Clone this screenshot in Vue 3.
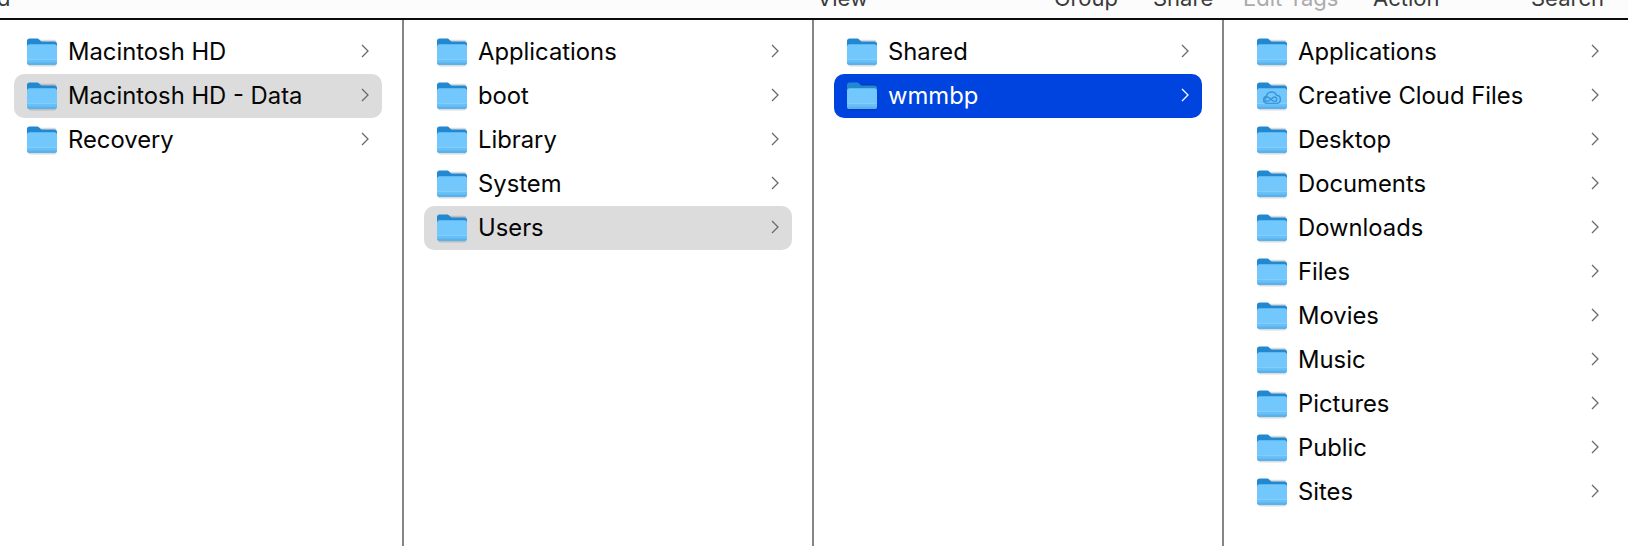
<template>
  <div class="finder">
    <div class="toolbar">
      <span class="tool">d</span>
      <span class="tool">View</span>
      <span class="tool">Group</span>
      <span class="tool">Share</span>
      <span class="tool dim">Edit Tags</span>
      <span class="tool">Action</span>
      <span class="tool">Search</span>
    </div>
    <div class="columns">
      <div v-for="(col, c) in columns" :key="c" class="column">
        <div
          v-for="item in col"
          :key="item.name"
          class="row"
          :class="{ grey: item.state === 'grey', blue: item.state === 'blue' }"
        >
          <svg class="folder" viewBox="0 0 30 29" width="30" height="29">
            <path d="M1 26V4c0-1.3.9-2.2 2.2-2.2h24c1.3 0 2.2.9 2.2 2.2v22c0 1.3-.9 2.4-2.2 2.4H3.2C1.9 28.4 1 27.3 1 26z" fill="#000" fill-opacity=".14" />
            <path d="M0 24V3c0-1.6 1-2.6 2.6-2.6h7.3c1 0 1.6.3 2.2 1l1.3 1.4c.4.4.9.6 1.5.6h12.5c1.6 0 2.6 1 2.6 2.6V24z" fill="#2288d2" />
            <path d="M0 8.8C0 7.3 1 6.3 2.5 6.3h25c1.5 0 2.5 1 2.5 2.5v15.7c0 1.6-1 2.6-2.6 2.6H2.6C1 27.1 0 26.1 0 24.5z" fill="#72c8fc" />
            <rect x="0" y="21" width="30" height="1" fill="#84cefc" />
            <path d="M0 22h30v2.6H0z" fill="#68c0f8" />
            <path d="M0 24.6h30c0 1.5-1 2.5-2.6 2.5H2.6C1 27.1 0 26.1 0 24.6z" fill="#5ab2ec" />
            <g v-if="item.cloud" fill="none" stroke="#3d95da" stroke-width="1.4">
              <path d="M10 21.4a3.6 3.6 0 0 1-.6-7.1 5.4 5.4 0 0 1 10.3-1 4.1 4.1 0 0 1 .5 8.1z" />
              <path d="M10.2 19.4a2.2 2.2 0 0 1 0-4.4c2.6 0 4.6 4.4 7.3 4.4 3 0 3-4.4.1-4.4-2.6 0-4.7 4.4-7.4 4.4z" />
            </g>
          </svg>
          <span class="name">{{ item.name }}</span>
          <svg class="chev" viewBox="0 0 8 14" width="8" height="14">
            <path d="M1 1l6 6-6 6" fill="none" stroke="currentColor" stroke-width="1.3" />
          </svg>
        </div>
      </div>
    </div>
  </div>
</template>

<script setup>
const columns = [
  [
    { name: 'Macintosh HD' },
    { name: 'Macintosh HD - Data', state: 'grey' },
    { name: 'Recovery' },
  ],
  [
    { name: 'Applications' },
    { name: 'boot' },
    { name: 'Library' },
    { name: 'System' },
    { name: 'Users', state: 'grey' },
  ],
  [{ name: 'Shared' }, { name: 'wmmbp', state: 'blue' }],
  [
    { name: 'Applications' },
    { name: 'Creative Cloud Files', cloud: true },
    { name: 'Desktop' },
    { name: 'Documents' },
    { name: 'Downloads' },
    { name: 'Files' },
    { name: 'Movies' },
    { name: 'Music' },
    { name: 'Pictures' },
    { name: 'Public' },
    { name: 'Sites' },
  ],
]
</script>

<style>
html,
body {
  margin: 0;
  background: #fff;
}
</style>

<style scoped>
.finder {
  width: 1628px;
  height: 546px;
  overflow: hidden;
  display: flex;
  flex-direction: column;
  font-family: Inter, "Liberation Sans", sans-serif;
  background: #fff;
}

/* only the lower part of the labels is in the crop, hence the negative margin */
.toolbar {
  height: 18px;
  flex: none;
  overflow: hidden;
  box-sizing: content-box;
  border-bottom: 2px solid #0c0c0c;
  background: #fcfcfc;
  display: grid;
  grid-template-columns: 820px 237px 99px 90px 130px 158px auto;
  margin-left: -3px;
}

.tool {
  margin-top: -14px;
  font-size: 22px;
  line-height: 24px;
  white-space: nowrap;
  color: #3a3a3a;
}

.tool.dim {
  color: #ababab;
}

.columns {
  flex: 1;
  display: grid;
  grid-template-columns: 404px 410px 410px 404px;
}

.column {
  box-sizing: border-box;
  padding: 10px 20px 0 14px;
  border-right: 2px solid #858585;
}

.column:nth-child(n + 2) {
  padding-left: 20px;
}

.column:last-child {
  padding-right: 16px;
  border-right: 0;
}

.row {
  height: 44px;
  display: flex;
  align-items: center;
  padding: 0 13px;
  border-radius: 10px;
  font-size: 23.8px;
  color: #050505;
}

.folder {
  flex: none;
  margin: 0 11px 0 0;
}

.name {
  flex: 1;
  margin-top: -2px;
  white-space: nowrap;
}

.chev {
  flex: none;
  margin-top: -2px;
  color: #6a6a6a;
}

.grey {
  background: #dcdcdc;
}

.blue {
  background: #0044df;
  color: #fff;
}

.blue .chev {
  color: #fff;
}
</style>
